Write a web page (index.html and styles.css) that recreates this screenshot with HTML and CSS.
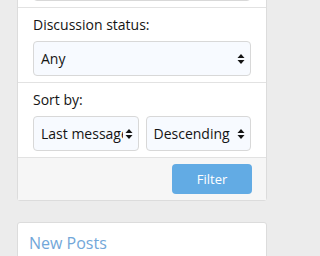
FILE: index.html
```html
<!DOCTYPE html>
<html>
<head>
<meta charset="utf-8">
<link rel="stylesheet" href="styles.css">
</head>
<body>
<div class="page">
  <div class="panel filter">
    <div class="row first">
      <div class="select empty"></div>
    </div>
    <div class="row">
      <div class="label">Discussion status:</div>
      <div class="select"><span class="val">Any</span><svg class="arrows" viewBox="0 0 8 12" width="8" height="12"><path d="M4 1 L7.5 5 H0.5 Z M4 11 L7.5 7 H0.5 Z"/></svg></div>
    </div>
    <div class="row">
      <div class="label">Sort by:</div>
      <div class="pair">
        <div class="select"><span class="val">Last message</span><svg class="arrows" viewBox="0 0 8 12" width="8" height="12"><path d="M4 1 L7.5 5 H0.5 Z M4 11 L7.5 7 H0.5 Z"/></svg></div>
        <div class="select"><span class="val">Descending</span><svg class="arrows" viewBox="0 0 8 12" width="8" height="12"><path d="M4 1 L7.5 5 H0.5 Z M4 11 L7.5 7 H0.5 Z"/></svg></div>
      </div>
    </div>
    <div class="footer">
      <button class="btn">Filter</button>
    </div>
  </div>
  <div class="panel posts">
    <h3 class="title">New Posts</h3>
  </div>
</div>
</body>
</html>
```
FILE: styles.css
```css
html, body {
  margin: 0;
  padding: 0;
  background: #ececec;
  font-family: "Open Sans", "Noto Sans", sans-serif;
  color: #141414;
}
body {
  width: 276px;
  overflow: hidden;
}
.page {
  padding: 0 9px 0 17px;
}
.panel {
  background: #fff;
  border: 1px solid #dcdcdc;
  border-radius: 3px;
}
.filter {
  margin-top: -42px;
}
.row {
  padding: 7px 15px 6px 15px;
  border-bottom: 1px solid #e2e2e2;
}
.label {
  height: 20px;
  line-height: 20px;
  font-size: 14px;
  margin-bottom: 6px;
  white-space: nowrap;
}
.select {
  position: relative;
  height: 35px;
  box-sizing: border-box;
  border: 1px solid #d8d8d8;
  border-radius: 4px;
  background: #f7faff;
  padding: 0 20px 0 7px;
  display: flex;
  align-items: center;
  overflow: hidden;
  font-size: 14px;
}
.val {
  white-space: nowrap;
}
.arrows {
  position: absolute;
  right: 5px;
  top: 11px;
  fill: #141414;
  background: #f7faff;
  padding-left: 2px;
}
.pair {
  display: grid;
  grid-template-columns: 1fr 1fr;
  gap: 7px;
}
.footer {
  background: #f6f6f6;
  padding: 6px 14px 6px 15px;
  display: flex;
  justify-content: flex-end;
}
.btn {
  width: 80px;
  height: 30px;
  border: 0;
  border-radius: 4px;
  background: #62abe4;
  color: #fff;
  font-family: inherit;
  font-size: 13px;
}
.posts {
  margin-top: 21px;
  padding: 9px 11px;
}
.title {
  margin: 0;
  font-weight: normal;
  font-size: 16px;
  line-height: 22px;
  color: #72a7d9;
}
```
